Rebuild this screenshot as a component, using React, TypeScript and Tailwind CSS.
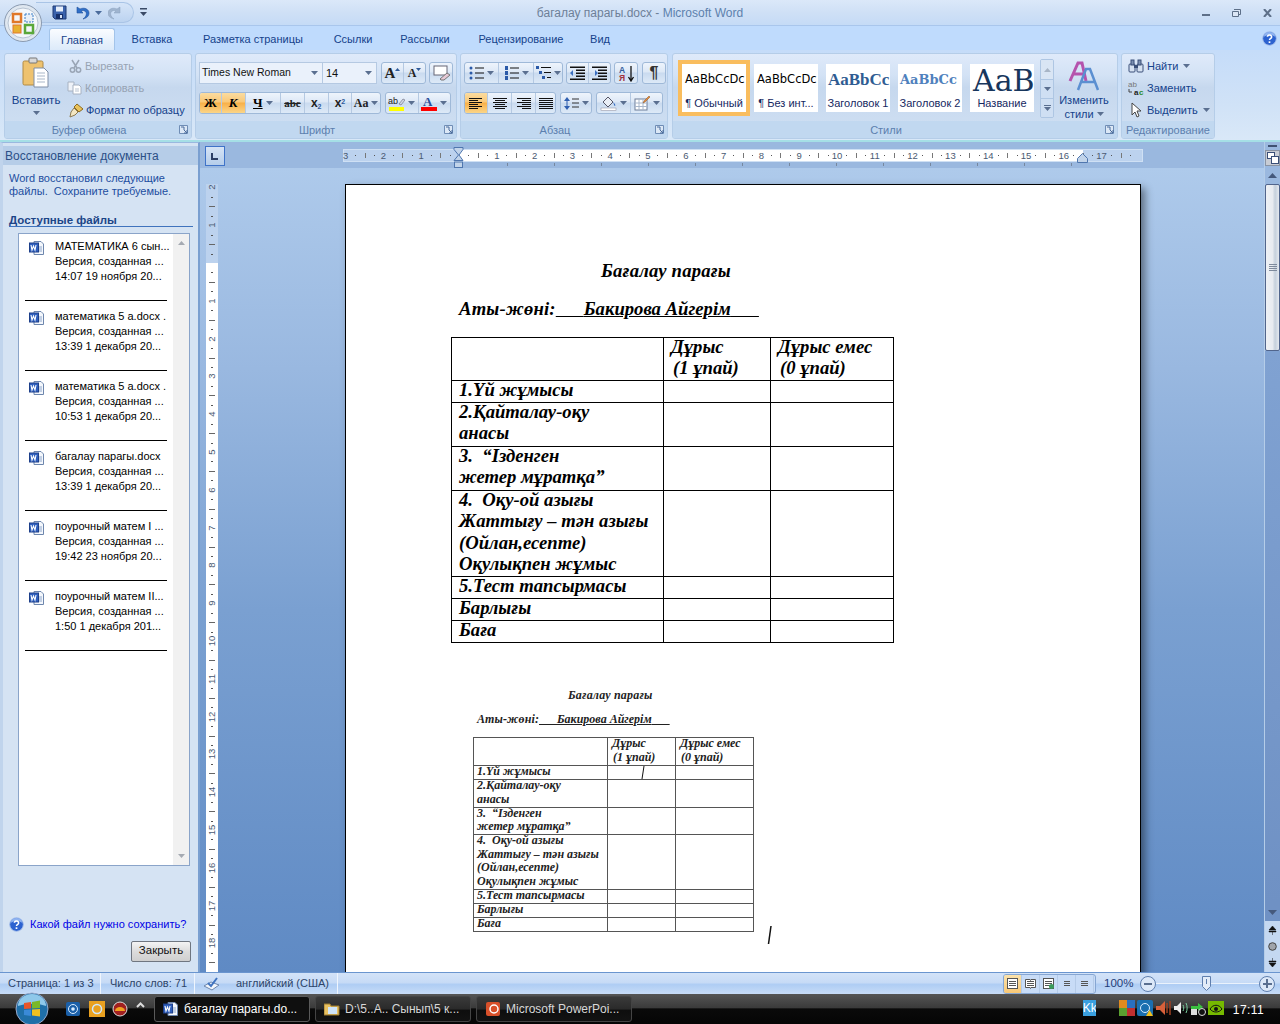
import React from "react";

const UI = "font-['Liberation_Sans',sans-serif]";

function Arrow({ c = "#5a6f90" }: { c?: string }) {
  return (
    <svg width="7" height="4" viewBox="0 0 7 4" className="shrink-0">
      <path d="M0 0h7L3.5 4z" fill={c} />
    </svg>
  );
}

function Launcher() {
  return (
    <svg width="9" height="9" viewBox="0 0 9 9" className="shrink-0">
      <path d="M0.5 0.5h8v8h-8z" fill="#dce8f6" stroke="#6f8db5" />
      <path d="M2 2h3v3M5 5l3 3M8 5v3H5" fill="none" stroke="#4b6c9c" />
    </svg>
  );
}

function Group({ w, label, launcher = true, children }: { w: string; label: string; launcher?: boolean; children: React.ReactNode }) {
  return (
    <div className={`${w} h-[86px] flex flex-col rounded-[3px] border border-[#b5cde8] bg-[linear-gradient(180deg,#dfeafa_0%,#d3e2f5_25%,#c6d8ee_40%,#d0e0f3_100%)] overflow-hidden`}>
      <div className="flex-1 min-h-0 relative">{children}</div>
      <div className={`h-[17px] flex items-center justify-center relative bg-[#c1d8f0] text-[#5c7fae] text-[11px] pt-[1px] ${launcher ? "pr-[18px]" : ""}`}>
        {label}
        {launcher && (
          <span className="absolute right-[3px] top-[4px] flex">
            <Launcher />
          </span>
        )}
      </div>
    </div>
  );
}

function Cluster({ w, children }: { w: string; children: React.ReactNode }) {
  return (
    <div className={`${w} h-[22px] flex rounded-[3px] border border-[#9fb9d8] bg-[linear-gradient(180deg,#eef4fc_0%,#dde8f6_45%,#c9daef_50%,#dde9f7_100%)] overflow-hidden`}>
      {children}
    </div>
  );
}

function Cell({ w, on = false, last = false, children }: { w: string; on?: boolean; last?: boolean; children: React.ReactNode }) {
  const bg = on ? "bg-[linear-gradient(180deg,#fbdca0_0%,#f9c878_45%,#f8b048_50%,#fbd588_100%)]" : "";
  const br = last ? "" : "border-r border-[#b5c9e2]";
  return <div className={`${w} h-full flex items-center justify-center gap-[3px] ${bg} ${br}`}>{children}</div>;
}

function Lines({ rows, w = 13 }: { rows: [number, number][]; w?: number }) {
  return (
    <svg width={w} height="12" viewBox={`0 0 ${w} 12`}>
      {rows.map(([x, l], i) => (
        <rect key={i} x={x} y={1 + i * 2} width={l} height="1" fill="#111" />
      ))}
    </svg>
  );
}

function Bullets({ kind }: { kind: number }) {
  return (
    <svg width="15" height="14" viewBox="0 0 15 14">
      {kind === 0 && [2, 7, 12].map((y) => <circle key={y} cx="2" cy={y} r="1.5" fill="#2b5aa8" />)}
      {kind === 1 && [2, 7, 12].map((y) => <rect key={y} x="1" y={y - 2} width="3" height="4" fill="#2b5aa8" />)}
      {kind === 2 && <><rect x="0" y="0" width="3" height="3" fill="#2b5aa8" /><rect x="3" y="5" width="3" height="3" fill="#2b5aa8" /><rect x="6" y="10" width="3" height="3" fill="#2b5aa8" /></>}
      {kind < 2 ? (
        [2, 7, 12].map((y) => <rect key={y} x="6" y={y - 0.5} width="9" height="1" fill="#111" />)
      ) : (
        <><rect x="5" y="1" width="10" height="1" fill="#111" /><rect x="8" y="6" width="7" height="1" fill="#111" /><rect x="11" y="11" width="4" height="1" fill="#111" /></>
      )}
    </svg>
  );
}

function Indent({ flip }: { flip?: boolean }) {
  return (
    <svg width="15" height="14" viewBox="0 0 15 14">
      {[1, 4, 7, 10, 13].map((y) => <rect key={y} x={y === 1 || y === 13 ? 0 : 6} y={y - 0.5} width={y === 1 || y === 13 ? 15 : 9} height="1.5" fill="#111" />)}
      {flip ? <path d="M0 7h3V4l3 3-3 3V7" fill="#3b6fc0" /> : <path d="M6 7H3V4L0 7l3 3V7" fill="#3b6fc0" />}
    </svg>
  );
}

function WordDoc({ s = 16 }: { s?: number }) {
  return (
    <svg width={s} height={s} viewBox="0 0 16 16" className="shrink-0">
      <path d="M5 1.5h7l2.5 2.5v10.5H5z" fill="#f4f7fc" stroke="#6d86ad" />
      <path d="M7 7h6M7 9h6M7 11h6" stroke="#8ea6ca" />
      <rect x="0.5" y="3" width="9" height="9" fill="#2f5fbd" stroke="#1d3f8a" />
      <path d="M2 5l1 5 1.5-4 1.5 4 1-5" fill="none" stroke="#fff" strokeWidth="1.1" />
    </svg>
  );
}

function HelpDot({ s = 16 }: { s?: number }) {
  return (
    <svg width={s} height={s} viewBox="0 0 16 16">
      <circle cx="8" cy="8" r="7.3" fill="#2c62d0" stroke="#a8c0ea" />
      <path d="M2 6a6 5 0 0 1 12 0 8 4 0 0 0-12 0z" fill="#8fb3f0" />
      <path d="M5.7 6.2a2.3 2 0 1 1 3.6 1.7c-.8.5-1.3.9-1.3 1.8" fill="none" stroke="#fff" strokeWidth="1.6" />
      <rect x="7.1" y="11" width="1.8" height="1.8" fill="#fff" />
    </svg>
  );
}

function TitleBar() {
  return (
    <div className="h-[26px] flex items-center bg-[linear-gradient(180deg,#dbe8f9_0%,#cfe0f6_50%,#c5dbf6_100%)] border-b border-[#a9c6ec]">
      <div className="w-[200px] h-full flex items-center">
        <div className="ml-[36px] w-[98px] h-[21px] flex items-center rounded-r-full bg-[linear-gradient(180deg,#d6e5f8_0%,#bcd3f0_100%)] border border-l-0 border-[#a9c4e6] pl-[16px]">
          <svg width="15" height="15" viewBox="0 0 15 15">
            <path d="M1 1h13v13H3l-2-2z" fill="#3a62ac" stroke="#1f3a75" />
            <rect x="4" y="1.5" width="7" height="5" fill="#e6eefa" />
            <rect x="4" y="9" width="7" height="5" fill="#16306a" />
            <rect x="8" y="10" width="2" height="3" fill="#d8e4f6" />
          </svg>
          <svg className="ml-[8px]" width="15" height="14" viewBox="0 0 15 14">
            <path d="M2 1v6h6L6 5a4 4 0 0 1 5 1c1 2 0 5-3 7 4-1 6-3 6-6 0-4-5-6-9-4z" fill="#2f6fc8" stroke="#1f4d9a" strokeWidth="0.6" />
          </svg>
          <span className="ml-[5px] flex"><Arrow c="#4b6c9c" /></span>
          <svg className="ml-[6px]" width="14" height="14" viewBox="0 0 14 14">
            <path d="M12 1v6H6l2-2a4 4 0 0 0-5 1c-1 2 0 5 3 7-4-1-6-3-6-6 0-4 5-6 9-4z" fill="#9fb4cf" stroke="#8aa0bd" strokeWidth="0.5" />
          </svg>
        </div>
        <svg className="ml-[6px]" width="7" height="9" viewBox="0 0 7 9">
          <rect x="0" y="0" width="7" height="1.5" fill="#3a4a66" />
          <path d="M0 4h7L3.5 8z" fill="#3a4a66" />
        </svg>
      </div>
      <div className="flex-1 text-center text-[12px] text-[#6d7f98] pt-[1px]">
        багалау парагы.docx - <span className="text-[#5d81ad]">Microsoft Word</span>
      </div>
      <div className="w-[200px] h-full flex items-center justify-end pr-[8px] gap-[22px]">
        <svg width="8" height="8" viewBox="0 0 8 8"><rect y="5" width="8" height="2" fill="#5d6f88" /></svg>
        <svg width="9" height="8" viewBox="0 0 9 8"><path d="M2 .5h6.5v5H6.500M.5 2.500h6v5h-6z" fill="#dbe6f5" stroke="#5d6f88" /></svg>
        <svg width="9" height="8" viewBox="0 0 9 8"><path d="M1 0l7 8M8 0L1 8" stroke="#5d6f88" strokeWidth="2" /></svg>
      </div>
    </div>
  );
}

const tabs: [string, string][] = [
  ["Вставка", "w-[74px]"],
  ["Разметка страницы", "w-[128px]"],
  ["Ссылки", "w-[72px]"],
  ["Рассылки", "w-[72px]"],
  ["Рецензирование", "w-[120px]"],
  ["Вид", "w-[38px]"],
];

function Tabs() {
  return (
    <div className="h-[24px] flex items-end bg-[#bfdbfd] pl-[49px] pr-[3px]">
      <div className="w-[66px] h-[22px] flex items-center justify-center pt-[1px] rounded-t-[3px] border border-b-0 border-[#a3c4ea] bg-[linear-gradient(180deg,#fafcff_0%,#dceafa_100%)] text-[11px] text-[#15428b]">Главная</div>
      <div className="flex h-[22px] items-center pt-[1px]">
        {tabs.map(([t, w]) => (
          <div key={t} className={`${w} text-center text-[11px] text-[#15428b]`}>{t}</div>
        ))}
      </div>
      <div className="flex-1 h-[22px] flex items-center justify-end pb-[2px]">
        <HelpDot s={15} />
      </div>
    </div>
  );
}

function Clipboard() {
  return (
    <Group w="w-[188px]" label="Буфер обмена">
      <div className="flex h-full">
        <div className="w-[62px] flex flex-col items-center pt-[3px]">
          <svg width="30" height="32" viewBox="0 0 30 32">
            <rect x="2" y="4" width="20" height="24" rx="1.500" fill="#eec26f" stroke="#b08a45" />
            <rect x="8" y="1" width="8" height="5" rx="1" fill="#d8d8d8" stroke="#777" />
            <path d="M13 11h10l4 4v15H13z" fill="#fff" stroke="#7e8ea6" />
            <path d="M16 16h8M16 19h8M16 22h8M16 25h8" stroke="#a9b7c9" />
          </svg>
          <span className="text-[11.5px] text-[#15428b] mt-[4px] leading-[14px]">Вставить</span>
          <span className="mt-[4px] flex"><Arrow /></span>
        </div>
        <div className="flex flex-col pt-[1px] text-[11px]">
          <div className="h-[22px] flex items-center gap-[3px] text-[#97a3b3]">
            <svg width="13" height="14" viewBox="0 0 13 14" className="ml-[2px]"><path d="M3 1l5 8M10 1L5 9" stroke="#9aa6b6" strokeWidth="1.500" /><circle cx="3.500" cy="11" r="2.200" fill="none" stroke="#9aa6b6" strokeWidth="1.500" /><circle cx="9.500" cy="11" r="2.200" fill="none" stroke="#9aa6b6" strokeWidth="1.500" /></svg>
            <span>Вырезать</span>
          </div>
          <div className="h-[22px] flex items-center gap-[3px] text-[#97a3b3]">
            <svg width="15" height="14" viewBox="0 0 15 14"><path d="M1 1h6v9H1z" fill="#eef2f8" stroke="#a7b2c2" /><path d="M6 4h6l2 2v7H6z" fill="#fff" stroke="#a7b2c2" /><path d="M8 8h4M8 10h4" stroke="#b9c3d0" /></svg>
            <span>Копировать</span>
          </div>
          <div className="h-[22px] flex items-center gap-[2px] text-[#15428b]">
            <svg width="17" height="15" viewBox="0 0 17 15"><path d="M10 1l6 5-4 3-5-5z" fill="#e9c25a" stroke="#8c6a1f" /><path d="M7 5l4 4-3 3-5 2 1-5z" fill="#f3e6c2" stroke="#8c7a50" /></svg>
            <span>Формат по образцу</span>
          </div>
        </div>
      </div>
    </Group>
  );
}

function Font() {
  return (
    <Group w="w-[262px]" label="Шрифт">
      <div className="flex flex-col gap-[8px] pl-[3px] pt-[8px]">
        <div className="flex items-center">
          <div className="w-[124px] h-[22px] flex items-center justify-between pl-[2px] pr-[4px] border border-[#b5c9e2] bg-[#eaf1fb] text-[10.500px] text-[#111]">
            <span>Times New Roman</span><Arrow />
          </div>
          <div className="w-[54px] h-[22px] flex items-center justify-between pl-[3px] pr-[4px] border border-l-0 border-[#b5c9e2] bg-[#eaf1fb] text-[11px] text-[#111]">
            <span>14</span><Arrow />
          </div>
          <div className="ml-[4px]">
            <Cluster w="w-[45px]">
              <Cell w="w-[22px]"><span className="font-['Liberation_Serif',serif] font-bold text-[15px] text-[#222]">A</span><svg width="5" height="3" className="-ml-[3px] -mt-[8px]" viewBox="0 0 5 3"><path d="M0 3h5L2.500 0z" fill="#2f5a9a" /></svg></Cell>
              <Cell w="w-[21px]" last><span className="font-['Liberation_Serif',serif] font-bold text-[12px] text-[#222]">A</span><svg width="5" height="3" className="-ml-[3px] -mt-[8px]" viewBox="0 0 5 3"><path d="M0 0h5L2.500 3z" fill="#2f5a9a" /></svg></Cell>
            </Cluster>
          </div>
          <div className="ml-[3px]">
            <Cluster w="w-[24px]">
              <Cell w="w-full" last>
                <svg width="17" height="16" viewBox="0 0 17 16"><rect x="1" y="1" width="13" height="9" fill="#fff" stroke="#667" /><path d="M7 14l7-6 3 2-6 5H8z" fill="#e6c8d4" stroke="#777" /></svg>
              </Cell>
            </Cluster>
          </div>
        </div>
        <div className="flex items-center">
          <Cluster w="w-[182px]">
            <Cell w="w-[22px]" on><span className="font-['Liberation_Serif',serif] font-bold text-[13px] text-black">Ж</span></Cell>
            <Cell w="w-[24px]" on><span className="font-['Liberation_Serif',serif] font-bold italic text-[13px] text-black">К</span></Cell>
            <Cell w="w-[36px]"><span className="font-['Liberation_Serif',serif] font-bold underline text-[13px] text-black">Ч</span><Arrow /></Cell>
            <Cell w="w-[24px]"><span className="font-['Liberation_Serif',serif] line-through font-bold text-[11px] text-[#222]">abc</span></Cell>
            <Cell w="w-[24px]"><span className="font-bold text-[12px] text-[#222]">x<sub className="text-[7px] text-[#2f5a9a]">2</sub></span></Cell>
            <Cell w="w-[24px]"><span className="font-bold text-[12px] text-[#222]">x<sup className="text-[7px] text-[#2f5a9a]">2</sup></span></Cell>
            <Cell w="w-[28px]" last><span className="font-['Liberation_Serif',serif] font-bold text-[12px] text-[#222]">Aa</span><Arrow /></Cell>
          </Cluster>
          <div className="ml-[4px]">
            <Cluster w="w-[66px]">
              <Cell w="w-[34px]">
                <svg width="17" height="17" viewBox="0 0 17 17"><text x="0" y="9" fontSize="9" fill="#222" fontFamily="Liberation Sans">ab</text><path d="M11 9l4-5 2 1-4 5z" fill="#cfd7e6" stroke="#667" strokeWidth="0.6" /><rect x="1" y="12" width="15" height="4" fill="#ffff00" /></svg>
                <Arrow />
              </Cell>
              <Cell w="w-[32px]" last>
                <svg width="16" height="17" viewBox="0 0 16 17"><text x="2" y="11" fontSize="13" fontWeight="bold" fill="#2b4f9a" fontFamily="Liberation Serif">A</text><rect x="0" y="12" width="16" height="4" fill="#ff0000" /></svg>
                <Arrow />
              </Cell>
            </Cluster>
          </div>
        </div>
      </div>
    </Group>
  );
}

function Paragraph() {
  return (
    <Group w="w-[208px]" label="Абзац">
      <div className="flex flex-col gap-[8px] pl-[3px] pt-[8px]">
        <div className="flex items-center gap-[3px]">
          <Cluster w="w-[99px]">
            <Cell w="w-[34px]"><Bullets kind={0} /><Arrow /></Cell>
            <Cell w="w-[35px]"><Bullets kind={1} /><Arrow /></Cell>
            <Cell w="w-[28px]" last><Bullets kind={2} /><Arrow /></Cell>
          </Cluster>
          <Cluster w="w-[45px]">
            <Cell w="w-[22px]"><Indent /></Cell>
            <Cell w="w-[21px]" last><Indent flip /></Cell>
          </Cluster>
          <Cluster w="w-[24px]">
            <Cell w="w-full" last>
              <svg width="17" height="17" viewBox="0 0 17 17"><text x="1" y="8" fontSize="8.500" fontWeight="bold" fill="#2f5a9a" fontFamily="Liberation Sans">А</text><text x="1" y="16" fontSize="8.500" fontWeight="bold" fill="#a0323c" fontFamily="Liberation Sans">Я</text><path d="M13 1v14M10.500 12l2.500 4 2.500-4" fill="none" stroke="#111" strokeWidth="1.300" /></svg>
            </Cell>
          </Cluster>
          <div className="ml-[1px]">
            <Cluster w="w-[24px]">
              <Cell w="w-full" last><span className="text-[16px] font-bold text-[#333] leading-none">¶</span></Cell>
            </Cluster>
          </div>
        </div>
        <div className="flex items-center gap-[4px]">
          <Cluster w="w-[92px]">
            <Cell w="w-[23px]" on><Lines rows={[[0, 13], [0, 9], [0, 13], [0, 9], [0, 13], [0, 9]]} w={14} /></Cell>
            <Cell w="w-[24px]"><Lines rows={[[0, 14], [2, 10], [0, 14], [2, 10], [0, 14], [2, 10]]} w={14} /></Cell>
            <Cell w="w-[24px]"><Lines rows={[[0, 14], [5, 9], [0, 14], [5, 9], [0, 14], [5, 9]]} w={14} /></Cell>
            <Cell w="w-[19px]" last><Lines rows={[[0, 14], [0, 14], [0, 14], [0, 14], [0, 14], [0, 14]]} w={14} /></Cell>
          </Cluster>
          <Cluster w="w-[32px]">
            <Cell w="w-full" last>
              <svg width="15" height="15" viewBox="0 0 15 15"><path d="M3 1l3 4H0zM3 14l3-4H0z" fill="#2f5fb0" /><rect x="2.500" y="4" width="1" height="7" fill="#2f5fb0" /><path d="M8 3h7M8 7h7M8 11h7" stroke="#333" /></svg>
              <Arrow />
            </Cell>
          </Cluster>
          <Cluster w="w-[67px]">
            <Cell w="w-[34px]">
              <svg width="17" height="16" viewBox="0 0 17 16"><path d="M3 7l5-5 5 5-5 5z" fill="#e9eef6" stroke="#556" /><path d="M13 7c2 2 3 3 2 4-1 0-1-2-2-4z" fill="#3a6fc0" /><rect x="1" y="13" width="15" height="2.500" fill="#fff" stroke="#889" strokeWidth="0.500" /></svg>
              <Arrow />
            </Cell>
            <Cell w="w-[31px]" last>
              <svg width="16" height="16" viewBox="0 0 16 16"><rect x="1" y="4" width="12" height="11" fill="#fff" stroke="#6e7f99" /><path d="M1 8h12M1 11.500h12M5 4v11M9 4v11" stroke="#a8b6ca" /><path d="M10 6l5-5 1 1-5 5-2 1z" fill="#e48a3c" stroke="#8a5420" strokeWidth="0.500" /></svg>
              <Arrow />
            </Cell>
          </Cluster>
        </div>
      </div>
    </Group>
  );
}

function StyleItem({ sample, label, sel = false, sc }: { sample: string; label: string; sel?: boolean; sc: string }) {
  return (
    <div className={`w-[64px] h-[48px] shrink-0 bg-white flex flex-col items-center ${sel ? "outline-[4px] outline outline-[#f9bd5e]" : ""}`}>
      <div className={`h-[32px] w-full flex items-center overflow-hidden whitespace-nowrap ${sc}`}>{sample}</div>
      <div className="text-[11px] text-[#15285f] whitespace-nowrap leading-[14px]">{label}</div>
    </div>
  );
}

function Styles() {
  return (
    <Group w="w-[446px]" label="Стили">
      <div className="flex h-full pl-[9px] pt-[10px]">
        <div className="flex gap-[8px] w-[352px] h-[48px] items-start">
          <StyleItem sel sample="AaBbCcDc" label="¶ Обычный" sc="font-['DejaVu_Sans',sans-serif] text-[11.500px] text-black pl-[3px]" />
          <StyleItem sample="AaBbCcDc" label="¶ Без инт..." sc="font-['DejaVu_Sans',sans-serif] text-[11.500px] text-black pl-[3px]" />
          <StyleItem sample="AaBbCc" label="Заголовок 1" sc="font-['Liberation_Serif',serif] font-bold text-[17px] text-[#2f5c92] pl-[2px]" />
          <StyleItem sample="AaBbCc" label="Заголовок 2" sc="font-['DejaVu_Serif',serif] font-bold text-[13px] text-[#4f81bd] pl-[2px]" />
          <StyleItem sample="AaB" label="Название" sc="font-['DejaVu_Serif',serif] text-[30px] text-[#17365d] pl-[3px]" />
        </div>
        <div className="ml-[6px] -mt-[5px] w-[14px] h-[59px] flex flex-col border border-[#aec6e3] rounded-[2px] overflow-hidden">
          <div className="h-[20px] flex items-center justify-center bg-[#d9e5f4] border-b border-[#aec6e3]"><svg width="7" height="4" viewBox="0 0 7 4"><path d="M0 4h7L3.500 0z" fill="#a8b5c6" /></svg></div>
          <div className="h-[19px] flex items-center justify-center bg-[#cfdff3] border-b border-[#aec6e3]"><Arrow /></div>
          <div className="flex-1 flex flex-col gap-[1px] items-center justify-center bg-[#cfdff3]"><span className="w-[7px] h-[1px] bg-[#5a6f90]" /><Arrow /></div>
        </div>
        <div className="w-[60px] -mt-[3px] flex flex-col items-center">
          <svg width="32" height="30" viewBox="0 0 32 30">
            <path d="M2 20L10 2h4l4 18M6 13h10" fill="none" stroke="#b553ad" strokeWidth="3" />
            <path d="M10 29L18 8h4l8 21M14 21h12" fill="none" stroke="#5b8fd1" strokeWidth="2.500" />
          </svg>
          <span className="text-[11px] text-[#15428b] leading-[14px] mt-[2px]">Изменить</span>
          <span className="text-[11px] text-[#15428b] leading-[14px] flex items-center gap-[3px]">стили <Arrow /></span>
        </div>
      </div>
    </Group>
  );
}

function Editing() {
  return (
    <Group w="w-[94px]" label="Редактирование" launcher={false}>
      <div className="flex flex-col pt-[1px] pl-[6px] text-[11px] text-[#15428b]">
        <div className="h-[22px] flex items-center gap-[3px]">
          <svg width="16" height="14" viewBox="0 0 16 14"><rect x="1" y="5" width="6" height="8" rx="1" fill="#d6e2f2" stroke="#3a4f78" /><rect x="9" y="5" width="6" height="8" rx="1" fill="#d6e2f2" stroke="#3a4f78" /><rect x="3" y="1" width="3" height="5" fill="#7b8fb0" stroke="#3a4f78" /><rect x="10" y="1" width="3" height="5" fill="#7b8fb0" stroke="#3a4f78" /><rect x="6" y="6" width="4" height="3" fill="#3a4f78" /></svg>
          <span>Найти</span><span className="ml-[2px] flex"><Arrow /></span>
        </div>
        <div className="h-[22px] flex items-center gap-[3px]">
          <svg width="16" height="16" viewBox="0 0 16 16"><text x="0" y="7" fontSize="8" fill="#777" fontFamily="Liberation Sans">ab</text><text x="6" y="15" fontSize="8" fontWeight="bold" fill="#222" fontFamily="Liberation Sans">a</text><text x="11" y="15" fontSize="8" fontWeight="bold" fill="#2a8a2a" fontFamily="Liberation Sans">c</text><path d="M1 9v3h3" fill="none" stroke="#444" /></svg>
          <span>Заменить</span>
        </div>
        <div className="h-[22px] flex items-center gap-[3px]">
          <svg width="16" height="16" viewBox="0 0 16 16"><path d="M4 1v12l3-3 2 5 2-1-2-5h4z" fill="#fff" stroke="#444" /></svg>
          <span>Выделить</span><span className="ml-[2px] flex"><Arrow /></span>
        </div>
      </div>
    </Group>
  );
}

function Ribbon() {
  return (
    <div className="h-[92px] pt-[3px] pl-[4px] flex bg-[linear-gradient(180deg,#c5dcf9_0%,#d0e2f7_60%,#d9e8f8_100%)] border-b-2 border-[#a5dfe6]">
      <div className="mr-[3px]"><Clipboard /></div>
      <div className="mr-[3px]"><Font /></div>
      <div className="mr-[4px]"><Paragraph /></div>
      <div className="mr-[3px]"><Styles /></div>
      <Editing />
    </div>
  );
}

const files = [
  ["МАТЕМАТИКА 6 сын...", "14:07 19 ноября 20..."],
  ["математика 5 a.docx .", "13:39 1 декабря 20..."],
  ["математика 5 a.docx .", "10:53 1 декабря 20..."],
  ["багалау парагы.docx", "13:39 1 декабря 20..."],
  ["поурочный матем I ...", "19:42 23 ноября 20..."],
  ["поурочный матем II...", "1:50 1 декабря 201..."],
];

function TaskPane() {
  return (
    <div className="w-[200px] h-full shrink-0 bg-[#d5e3f3] border-r-2 border-[#7a9fd0] border-l-[3px] border-l-[#c0d4ec] flex flex-col pt-[3px] border-t border-t-[#9ab8df]">
      <div className="h-[19px] flex items-center pl-[2px] bg-[#b6cde8] text-[12px] text-[#2b4f86]">Восстановление документа</div>
      <div className="mt-[7px] pl-[6px] text-[11px] leading-[13px] text-[#1d4ea0]">
        <div>Word восстановил следующие</div>
        <div>файлы.&nbsp; Сохраните требуемые.</div>
      </div>
      <div className="mt-[15px] ml-[6px] mr-[5px] h-[14px] leading-[14px] text-[11.500px] font-bold text-[#1c4587] border-b border-[#3f73bd]">Доступные файлы</div>
      <div className="mt-[6px] ml-[15px] w-[172px] h-[633px] shrink-0 flex bg-white border border-[#8aa4c9]">
        <div className="flex-1 min-w-0 pl-[6px] -mt-[3px]">
          {files.map(([n, d]) => (
            <div key={d} className="h-[70px] pt-[8px] border-b border-black w-[142px]">
              <div className="flex">
                <div className="w-[30px] shrink-0 pl-[4px] pt-[1px]"><WordDoc s={16} /></div>
                <div className="text-[11px] text-black leading-[15px] whitespace-nowrap">
                  <div>{n}</div>
                  <div>Версия, созданная ...</div>
                  <div>{d}</div>
                </div>
              </div>
            </div>
          ))}
        </div>
        <div className="w-[16px] bg-[#f1f1f1] flex flex-col items-center justify-between py-[7px]">
          <svg width="7" height="4" viewBox="0 0 7 4"><path d="M0 4h7L3.500 0z" fill="#a5aab2" /></svg>
          <Arrow c="#a5aab2" />
        </div>
      </div>
      <div className="mt-[50px] ml-[6px] flex items-center gap-[6px] text-[11px] text-[#0000e6]">
        <HelpDot s={15} />
        <span>Какой файл нужно сохранить?</span>
      </div>
      <div className="flex justify-end pr-[7px] mt-[8px]">
        <div className="w-[60px] h-[21px] flex items-center justify-center rounded-[2px] border border-[#6f7680] bg-[linear-gradient(180deg,#f4f4f4_0%,#dcdcdc_50%,#cfcfcf_100%)] text-[11.500px] text-[#111]">Закрыть</div>
      </div>
    </div>
  );
}

function HRuler() {
  const nums: [number, string][] = [];
  for (let i = -3; i <= 17; i++) if (i !== 0) nums.push([458 + i * 37.8 - 343, String(Math.abs(i))]);
  const dots: number[] = [];
  const dashes: number[] = [];
  for (let i = -3; i < 18; i++) {
    dots.push(458 + (i + 0.25) * 37.8 - 343, 458 + (i + 0.75) * 37.8 - 343);
    dashes.push(458 + (i + 0.5) * 37.8 - 343);
  }
  const marks = Array.from({ length: 13 }, (_, i) => 506 + i * 47 - 343);
  return (
    <div className="h-[26px] flex bg-[#9ab8df] items-start">
      <div className="ml-[5px] mt-[4px] w-[20px] h-[20px] flex items-center justify-center border border-[#3f73c8] bg-[linear-gradient(180deg,#d6e4f6_0%,#b5cdea_100%)]">
        <svg width="8" height="8" viewBox="0 0 8 8"><path d="M1 1v6h6" fill="none" stroke="#2c3f66" strokeWidth="2" /></svg>
      </div>
      <div className="relative ml-[118px] mt-[7px] w-[800px] h-[13px] bg-[#bcd2ee] border border-[#cfe0f4] text-[9.500px] text-[#4a5a72]">
        <div className="absolute left-[115px] top-0 w-[624px] h-full bg-white" />
        {dots.map((x) => x > 1 && x < 790 && <span key={x} className="absolute top-[5px] w-[1px] h-[1px] bg-[#555]" style={{ left: x }} />)}
        {dashes.map((x) => x > 1 && x < 790 && <span key={x} className="absolute top-[3px] w-[1px] h-[5px] bg-[#777]" style={{ left: x }} />)}
        {nums.map(([x, t]) => (
          <span key={x} className="absolute top-0 leading-[11px] -translate-x-1/2" style={{ left: x }}>{t}</span>
        ))}
        {marks.map((x) => <span key={x} className="absolute top-[13px] w-[1px] h-[3px] bg-[#77889f]" style={{ left: x }} />)}
        <svg className="absolute left-[109px] -top-[3px]" width="12" height="22" viewBox="0 0 12 22">
          <path d="M1 .5h9v2L6 8l4 5.500H1L5.500 8 1 2.500z" fill="#c2d4ea" stroke="#4f76ae" />
          <rect x="1.500" y="15" width="8" height="5.500" fill="#c2d4ea" stroke="#4f76ae" />
        </svg>
        <svg className="absolute left-[732px] top-[3px]" width="13" height="10" viewBox="0 0 13 10"><path d="M6.500 .5l5 5v4h-10v-4z" fill="#c2d4ea" stroke="#4f76ae" /></svg>
      </div>
    </div>
  );
}

function VRuler() {
  const base = 263 - 184;
  const nums: [number, string][] = [];
  for (let i = -2; i <= 18; i++) if (i !== 0) nums.push([base + i * 37.8, String(Math.abs(i))]);
  const ticks: number[] = [];
  for (let i = -2; i <= 18; i++) ticks.push(base + (i + 0.25) * 37.8, base + (i + 0.75) * 37.8);
  const half: number[] = [];
  for (let i = -2; i <= 18; i++) half.push(base + (i + 0.5) * 37.8);
  return (
    <div className="w-[25px] ml-[6px] h-full shrink-0 pt-[16px]">
      <div className="relative w-[12px] h-[788px] bg-white overflow-hidden text-[9.500px] text-[#4a5a72]">
        <div className="absolute left-0 top-0 w-full h-[79px] bg-[#bcd2ee]" />
        {ticks.map((y) => <span key={y} className="absolute left-[5px] w-[2px] h-[1px] bg-[#555]" style={{ top: y }} />)}
        {half.map((y) => <span key={y} className="absolute left-[3px] w-[6px] h-[1px] bg-[#666]" style={{ top: y }} />)}
        {nums.map(([y, t]) => (
          <span key={y} className="absolute left-0 w-[12px] text-center leading-[12px] -rotate-90" style={{ top: y - 6 }}>{t}</span>
        ))}
      </div>
    </div>
  );
}

const bigCell = "border border-black align-top pl-[7px] font-bold italic";
const rows: [string, string][] = [
  ["1.Үй жұмысы", "h-[22px]"],
  ["2.Қайталау-оқу\nанасы", "h-[44px]"],
  ["3.\u00a0\u00a0“Ізденген\nжетер мұратқа”", "h-[44px]"],
  ["4.\u00a0\u00a0Оқу-ой азығы\nЖаттығу – тән азығы\n(Ойлан,есепте)\nОқулықпен жұмыс", "h-[86px]"],
  ["5.Тест тапсырмасы", "h-[22px]"],
  ["Барлығы", "h-[22px]"],
  ["Баға", "h-[22px]"],
];

function Page() {
  return (
    <div className="relative w-[796px] h-[900px] bg-white border border-black shadow-[4px_4px_8px_rgba(0,0,0,0.45)] font-['Liberation_Serif',serif] font-bold italic text-black">
      <div className="pt-[75px] pl-[255px] h-[97px] text-[18.670px] leading-[22px] tracking-[0.2px]">Бағалау парағы</div>
      <div className="mt-[16px] pl-[113px] text-[18.670px] leading-[22px] whitespace-nowrap">
        <span className="tracking-[0.2px]">Аты-жөні:</span><span className="underline">{"\u00a0\u00a0\u00a0\u00a0\u00a0\u00a0"}Бакирова Айгерім{"\u00a0\u00a0\u00a0\u00a0\u00a0\u00a0"}</span>
      </div>
      <table className="mt-[17px] ml-[105px] w-[442px] border-collapse table-fixed text-[18.670px] leading-[21.300px]">
        <colgroup>
          <col className="w-[212px]" />
          <col className="w-[107px]" />
          <col className="w-[123px]" />
        </colgroup>
        <tbody>
          <tr className="h-[43px]">
            <td className="border border-black" />
            <td className={bigCell}><div className="-mt-[2px]">Дұрыс<br /><span className="ml-[2px]">(1 ұпай)</span></div></td>
            <td className={`${bigCell} pl-[6px]`}><div className="-mt-[2px]">Дұрыс емес<br /><span className="ml-[2px]">(0 ұпай)</span></div></td>
          </tr>
          {rows.map(([t, h]) => (
            <tr key={t} className={h}>
              <td className={`${bigCell} whitespace-pre-line`}><div className="-mt-[2px]">{t}</div></td>
              <td className="border border-black" />
              <td className="border border-black" />
            </tr>
          ))}
        </tbody>
      </table>

      <div className="mt-[45px] pl-[222px] text-[12px] leading-[14px] text-[#222] tracking-[0.2px]">Бағалау парағы</div>
      <div className="mt-[10px] pl-[131px] text-[12px] leading-[14px] text-[#222] whitespace-nowrap">
        <span className="tracking-[0.1px]">Аты-жөні:</span><span className="underline">{"\u00a0\u00a0\u00a0\u00a0\u00a0\u00a0"}Бакирова Айгерім{"\u00a0\u00a0\u00a0\u00a0\u00a0\u00a0"}</span>
      </div>
      <table className="mt-[11px] ml-[127px] w-[280px] border-collapse table-fixed text-[12px] leading-[13.500px] text-[#222]">
        <colgroup>
          <col className="w-[134px]" />
          <col className="w-[68px]" />
          <col className="w-[78px]" />
        </colgroup>
        <tbody>
          <tr className="h-[28px]">
            <td className="border border-[#555]" />
            <td className="border border-[#555] align-top pl-[4px]"><div className="-mt-[1px]">Дұрыс<br /><span className="ml-[1px]">(1 ұпай)</span></div></td>
            <td className="border border-[#555] align-top pl-[4px]"><div className="-mt-[1px]">Дұрыс емес<br /><span className="ml-[1px]">(0 ұпай)</span></div></td>
          </tr>
          {rows.map(([t, h], i) => (
            <tr key={t} className={h === "h-[22px]" ? "h-[14px]" : h === "h-[44px]" ? "h-[27.500px]" : "h-[55px]"}>
              <td className="border border-[#555] align-top pl-[3px] whitespace-pre-line"><div className="-mt-[1px]">{t}</div></td>
              <td className="border border-[#555] relative">
                {i === 0 && (
                  <svg className="absolute left-[33px] top-0" width="4" height="13" viewBox="0 0 4 13"><path d="M3 0L1 13" stroke="#111" strokeWidth="1" /></svg>
                )}
              </td>
              <td className="border border-[#555]" />
            </tr>
          ))}
        </tbody>
      </table>
      <svg className="absolute left-[421px] top-[741px]" width="5" height="18" viewBox="0 0 5 18"><path d="M4 0L1.500 18" stroke="#111" strokeWidth="1.500" /></svg>
    </div>
  );
}

function Scrollbar() {
  return (
    <div className="w-[16px] shrink-0 h-full flex flex-col bg-[#9ab8df] border-l border-[#b5cde8]">
      <div className="h-[8px] flex items-center justify-center"><span className="w-[9px] h-[2px] bg-[#3f5273]" /></div>
      <div className="h-[16px] flex items-center justify-center bg-[#c8ccd4] border border-[#8a94a4]">
        <svg width="12" height="12" viewBox="0 0 12 12"><rect x="0.500" y="0.500" width="7" height="6" fill="#fff" stroke="#3a4f78" /><rect x="4.500" y="4.500" width="7" height="7" fill="#fff" stroke="#3a4f78" /></svg>
      </div>
      <div className="h-[18px] flex items-center justify-center"><svg width="9" height="5" viewBox="0 0 9 5"><path d="M0 5h9L4.500 0z" fill="#45597c" /></svg></div>
      <div className="h-[167px] rounded-[2px] border border-[#51658c] bg-[linear-gradient(90deg,#eef1f5_0%,#e8ebf0_50%,#c5d0dc_70%,#e5e9ef_100%)] flex flex-col items-center justify-center gap-[1px]">
        {[0, 1, 2, 3].map((i) => <span key={i} className="w-[8px] h-[1px] bg-[#7e8a9c]" />)}
      </div>
      <div className="flex-1 bg-[linear-gradient(180deg,#80a2d2_0%,#6f91c4_100%)]" />
      <div className="h-[18px] flex items-center justify-center bg-[#6f91c4]"><svg width="9" height="5" viewBox="0 0 9 5"><path d="M0 0h9L4.500 5z" fill="#45597c" /></svg></div>
      <div className="h-[51px] bg-[#c4d8f1] flex flex-col items-center justify-between py-[5px]">
        <svg width="9" height="9" viewBox="0 0 9 9"><path d="M4.500 0L8 4H1zM1 5h7v1H1zM4.500 5v4" fill="#111" stroke="#111" strokeWidth="0.500" /></svg>
        <svg width="9" height="9" viewBox="0 0 9 9"><circle cx="4.500" cy="4.500" r="3.800" fill="#a0a4aa" stroke="#444" /></svg>
        <svg width="9" height="9" viewBox="0 0 9 9"><path d="M4.500 9L8 5H1zM1 3h7v1H1zM4.500 0v4" fill="#111" stroke="#111" strokeWidth="0.500" /></svg>
      </div>
    </div>
  );
}

function Main() {
  return (
    <div className="h-[830px] flex overflow-hidden">
      <TaskPane />
      <div className="flex-1 min-w-0 flex flex-col">
        <HRuler />
        <div className="flex-1 min-h-0 flex overflow-hidden bg-[linear-gradient(180deg,#aecaeb_0%,#99b8e0_25%,#7aa0d1_55%,#5f8ac4_100%)]">
          <VRuler />
          <div className="flex-1 min-w-0 pl-[114px] pt-[16px] overflow-hidden">
            <Page />
          </div>
        </div>
      </div>
      <Scrollbar />
    </div>
  );
}

function Status() {
  return (
    <div className="h-[22px] flex items-center bg-[linear-gradient(180deg,#d3e3f8_0%,#c7dbf6_45%,#afcdf4_55%,#c7dcf7_100%)] border-t border-[#6a95cf] text-[11px] text-[#2d4468]">
      <div className="w-[101px] h-full flex items-center pl-[8px] border-r border-[#eff5fd]">Страница: 1 из 3</div>
      <div className="w-[94px] h-full flex items-center pl-[9px] border-r border-[#eff5fd]">Число слов: 71</div>
      <div className="w-[143px] h-full flex items-center pl-[8px] border-r border-[#eff5fd] gap-[16px]">
        <svg width="17" height="14" viewBox="0 0 17 14"><path d="M1 9l7-4 8 3-7 5z" fill="#f2f6fb" stroke="#6d86ad" /><path d="M5 6l3 3 6-8" fill="none" stroke="#3f73c0" strokeWidth="2" /></svg>
        <span>английский (США)</span>
      </div>
      <div className="flex-1" />
      <div className="w-[93px] h-[20px] flex rounded-[3px] border border-[#86a6d2] bg-[#c8dcf7] overflow-hidden">
        {[0, 1, 2, 3, 4].map((i) => (
          <div key={i} className={`w-[18px] h-full flex items-center justify-center border-r border-[#b5cbe8] ${i === 0 ? "bg-[linear-gradient(180deg,#fbe3ac_0%,#f8c876_100%)]" : ""}`}>
            <svg width="11" height="11" viewBox="0 0 11 11">
              {i === 1 ? <path d="M.5 1.500h4.500l.5 1 .5-1h4.500v8H6l-.5 1-.5-1H.500z" fill="#fff" stroke="#555" /> : <rect x="0.500" y="0.500" width="10" height="10" fill={i === 0 || i === 2 ? "#fff" : "none"} stroke={i === 0 || i === 2 ? "#555" : "none"} />}
              {[3, 5, 7].map((y) => <rect key={y} x={i === 3 ? 3 : 2} y={y} width={i === 3 ? 6 : 7} height="1" fill="#555" />)}
              {i === 2 && <circle cx="8.500" cy="8.500" r="2.500" fill="#3a9a5a" />}
            </svg>
          </div>
        ))}
      </div>
      <div className="ml-[8px] w-[30px] text-[11.500px] text-[#1f3c78]">100%</div>
      <div className="ml-[6px] w-[135px] flex items-center relative">
        <div className="w-[16px] h-[16px] rounded-full border border-[#5f7fae] bg-[#dce8f8] flex items-center justify-center shrink-0"><span className="w-[8px] h-[2px] bg-[#5a6f90]" /></div>
        <div className="flex-1 h-[1px] bg-[#eaf2fc] relative">
          <svg className="absolute left-[46px] -top-[7px]" width="9" height="15" viewBox="0 0 9 15"><path d="M.5.5h8v10l-4 4-4-4z" fill="#e3ecf8" stroke="#5f7fae" /><path d="M4.500 3v5" stroke="#5f7fae" /></svg>
        </div>
        <div className="w-[16px] h-[16px] rounded-full border border-[#5f7fae] bg-[#dce8f8] flex items-center justify-center shrink-0 relative">
          <span className="w-[9px] h-[2px] bg-[#5a6f90]" />
          <span className="absolute w-[2px] h-[9px] bg-[#5a6f90]" />
        </div>
      </div>
      <div className="w-[5px]" />
    </div>
  );
}

function Task({ w, active, icon, text }: { w: string; active?: boolean; icon: React.ReactNode; text: string }) {
  return (
    <div className={`${w} h-[26px] mt-[2px] flex items-center pl-[8px] gap-[5px] rounded-[3px] border ${active ? "border-[#5a5a5a] bg-[#0f0f0f]" : "border-[#444] bg-[linear-gradient(180deg,#3a3a3a_0%,#2a2a2a_50%,#0e0e0e_55%,#121212_100%)]"} text-[12px] ${active ? "text-white" : "text-[#d8d8d8]"} whitespace-nowrap overflow-hidden`}>
      {icon}
      <span>{text}</span>
    </div>
  );
}

function Taskbar() {
  return (
    <div className="h-[30px] flex items-start bg-[linear-gradient(180deg,#555_0%,#3b3b3b_45%,#0a0a0a_50%,#050505_100%)] relative">
      <div className="w-[66px]" />
      <svg width="14" height="14" viewBox="0 0 14 14" className="mt-[8px]"><rect width="14" height="14" rx="2" fill="#1a5fa8" /><circle cx="7" cy="7" r="4.500" fill="none" stroke="#d8ecff" /><circle cx="7" cy="7" r="1.800" fill="#d8ecff" /></svg>
      <svg width="16" height="16" viewBox="0 0 16 16" className="mt-[7px] ml-[9px]"><rect width="16" height="16" fill="#e8a020" /><circle cx="8" cy="8" r="4.500" fill="none" stroke="#cfe8ff" strokeWidth="1.500" /></svg>
      <svg width="16" height="16" viewBox="0 0 16 16" className="mt-[7px] ml-[7px]"><circle cx="8" cy="8" r="7" fill="#a02020" stroke="#ddd" /><path d="M3 10a5 4 0 0 1 10 0z" fill="#f0a020" /></svg>
      <svg width="9" height="6" viewBox="0 0 9 6" className="mt-[8px] ml-[8px]"><path d="M1 5l3.500-3.500L8 5" fill="none" stroke="#ddd" strokeWidth="2" /></svg>
      <div className="flex ml-[9px] gap-[5px]">
        <Task w="w-[156px]" active icon={<WordDoc s={16} />} text="багалау парагы.do..." />
        <Task w="w-[156px]" icon={<svg width="16" height="14" viewBox="0 0 16 14"><path d="M0 2h6l1 2h8v9H0z" fill="#e8c060" stroke="#9a7a30" /><rect x="4" y="5" width="9" height="7" fill="#cfe4f8" /></svg>} text="D:\5..А.. Сынып\5 к..." />
        <Task w="w-[156px]" icon={<svg width="16" height="16" viewBox="0 0 16 16"><rect x="1" y="1" width="14" height="14" rx="2" fill="#d8502a" /><circle cx="9" cy="8" r="4" fill="none" stroke="#fff" strokeWidth="1.500" /></svg>} text="Microsoft PowerPoi..." />
      </div>
      <div className="flex-1" />
      <div className="mt-[6px] w-[13px] h-[16px] bg-[#3aa0e0] text-white text-[12px] leading-[16px] overflow-hidden">Kk</div>
      <div className="mt-[6px] ml-[23px] flex items-center gap-[2px]">
        <svg width="16" height="16" viewBox="0 0 16 16"><rect width="8" height="8" fill="#e08a20" /><rect x="8" width="8" height="8" fill="#2a70c0" /><rect y="8" width="8" height="8" fill="#5aa030" /><rect x="8" y="8" width="8" height="8" fill="#c03030" /></svg>
        <svg width="16" height="16" viewBox="0 0 16 16"><rect width="16" height="16" rx="2" fill="#1a6fb0" /><circle cx="8" cy="8" r="4.500" fill="none" stroke="#d8ecff" /><path d="M9 16l3.500-6L16 16z" fill="#f0c020" /></svg>
        <svg width="16" height="16" viewBox="0 0 16 16"><path d="M1 6h4l5-5v14l-5-5H1z" fill="#d8603a" /><path d="M12 3v10M15 1v14" stroke="#a04020" strokeWidth="1.500" /></svg>
        <svg width="15" height="16" viewBox="0 0 15 16"><path d="M1 6h3l4-4v12l-4-4H1z" fill="#eee" /><path d="M10 5c1 2 1 4 0 6M13 3c1.500 3 1.500 7 0 10" fill="none" stroke="#7ad0a0" /></svg>
        <svg width="16" height="16" viewBox="0 0 16 16"><path d="M1 6h7V3l5 4-5 4V9H1z" fill="#3ac040" /><rect x="1" y="9" width="6" height="6" fill="#ddd" /><circle cx="12" cy="12" r="3.500" fill="#111" stroke="#ddd" /></svg>
        <svg width="16" height="14" viewBox="0 0 16 14"><rect width="16" height="14" fill="#76b900" /><path d="M2 8c3-5 9-5 12 0-3 4-9 4-12 0z" fill="none" stroke="#111" /><circle cx="8" cy="8" r="2" fill="#111" /></svg>
      </div>
      <div className="mt-[7px] ml-[9px] mr-[16px] text-[12px] text-white tracking-[0.4px]">17:11</div>

      <svg className="absolute left-[15px] -top-[2px]" width="34" height="34" viewBox="0 0 34 34">
        <circle cx="17" cy="17" r="16" fill="#1f6fa8" stroke="#9ac" />
        <path d="M3 14a14 12 0 0 1 28 0 20 8 0 0 0-28 0z" fill="#8fc8ea" />
        <path d="M9 11l7-1v6.500l-7 .5z" fill="#e8562a" />
        <path d="M17 10l8-1.500v7.500l-8 .5z" fill="#7ab82a" />
        <path d="M9 18l7-.5V24l-7-1z" fill="#3a8ad8" />
        <path d="M17 17.500l8-.5v7.500l-8-1z" fill="#f0c020" />
      </svg>
    </div>
  );
}

export default function App() {
  return (
    <div className={`w-[1280px] h-[1024px] relative flex flex-col overflow-hidden bg-[#9ab8df] ${UI}`}>
      <TitleBar />
      <Tabs />
      <Ribbon />
      <Main />
      <Status />
      <Taskbar />
      <svg className="absolute left-[3px] top-[3px]" width="40" height="40" viewBox="0 0 40 40">
        <circle cx="20" cy="20" r="18.500" fill="#dfe7f0" stroke="#8a9ab0" />
        <circle cx="20" cy="20" r="15" fill="#f4f7fb" stroke="#b7c3d2" />
        <path d="M10 11h8v8h-8z" fill="none" stroke="#e0782a" strokeWidth="2.500" />
        <rect x="22" y="11" width="8" height="8" fill="#e8eef6" stroke="#3a7fc8" strokeDasharray="2 1" />
        <rect x="10" y="22" width="8" height="8" fill="#e8b030" stroke="#e0782a" />
        <rect x="22" y="22" width="8" height="8" fill="none" stroke="#5aa83a" strokeWidth="2.500" />
      </svg>
    </div>
  );
}
